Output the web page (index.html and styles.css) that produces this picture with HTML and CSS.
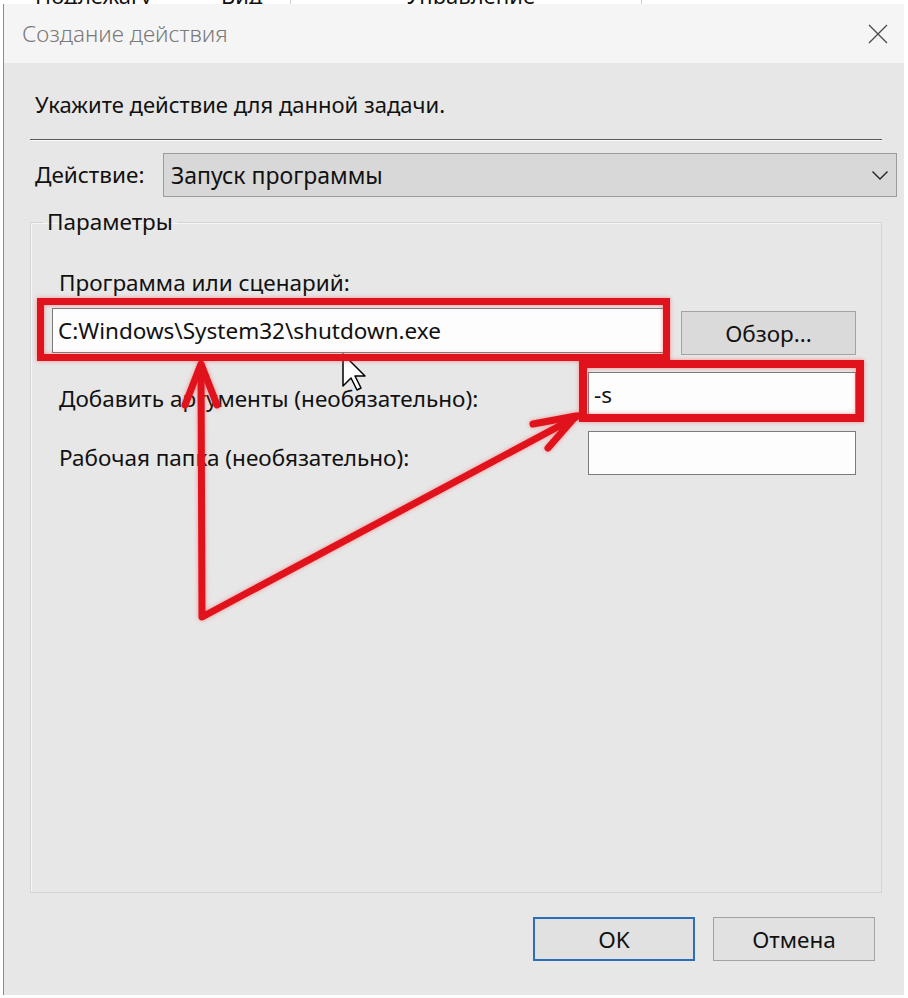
FILE: index.html
```html
<!DOCTYPE html>
<html lang="ru">
<head>
    <meta charset="UTF-8">
    <meta name="viewport" content="width=device-width, initial-scale=1.0">
    <title>Создание действия</title>
    <link rel="stylesheet" href="styles.css">
</head>
<body>
    <div class="behind">
        <span class="col c1">Подлежагу</span>
        <span class="col c2">Вид</span>
        <span class="col c3">Управление</span>
    </div>

    <div class="window">
        <div class="titlebar">
            <span class="title">Создание действия</span>
            <svg class="close" width="20" height="20" viewBox="0 0 20 20">
                <path d="M1 1L19 19M19 1L1 19" stroke="#4a4a4a" stroke-width="1.3" fill="none"/>
            </svg>
        </div>

        <div class="content">
            <p class="prompt">Укажите действие для данной задачи.</p>
            <div class="rule"></div>

            <div class="action-row">
                <span class="label">Действие:</span>
                <div class="combo">
                    <span>Запуск программы</span>
                    <svg width="16" height="9" viewBox="0 0 16 9">
                        <polyline points="0.5,0.5 8,8 15.5,0.5" stroke="#222" stroke-width="1.4" fill="none"/>
                    </svg>
                </div>
            </div>

            <fieldset class="params">
                <legend>Параметры</legend>
                <div class="params-body">
                    <div class="field-label">Программа или сценарий:</div>
                    <div class="prog-row">
                        <input class="textbox prog" type="text" value="C:Windows\System32\shutdown.exe">
                        <button class="btn browse">Обзор...</button>
                    </div>
                    <div class="opt-row">
                        <span class="field-label">Добавить аргументы (необязательно):</span>
                        <input class="textbox short" type="text" value="-s">
                    </div>
                    <div class="opt-row second">
                        <span class="field-label">Рабочая папка (необязательно):</span>
                        <input class="textbox short" type="text" value="">
                    </div>
                </div>
            </fieldset>

            <div class="footer">
                <button class="btn ok">OK</button>
                <button class="btn">Отмена</button>
            </div>
        </div>
    </div>

    <!-- red annotation drawn over the dialog -->
    <svg class="marks" width="908" height="998" viewBox="0 0 908 998">
        <path class="cursor" d="M343 354 V386 L351 378 L357 390 L361 388 L355 376 L365 376 Z"/>
        <g class="red">
            <rect x="40.5" y="301.5" width="626" height="56"/>
            <rect x="583" y="364" width="277" height="54" stroke-width="8"/>
            <polyline points="201,365 202,617 578,416"/>
            <polyline points="185,405 201,364 217,405"/>
            <polyline points="533,424 576,416 548,448"/>
        </g>
    </svg>
</body>
</html>
```

FILE: styles.css
```css
body {
    margin: 0;
    width: 908px;
    height: 998px;
    overflow: hidden;
    position: relative;
    background: #fff;
    font-family: "Noto Sans", "Open Sans", sans-serif;
    color: #111;
}

.behind {
    height: 4px;
    overflow: hidden;
    display: flex;
    align-items: flex-end;
    font-size: 22px;
}
.col {
    line-height: 18px;
    height: 18px;
    flex: none;
}
.c1 { margin-left: 35px; width: 255px; border-right: 1px solid #ccc; }
.c2 { margin-left: -70px; width: 420px; border-right: 1px solid #ccc; }
.c3 { margin-left: -236px; }

.window {
    margin-left: 3px;
    width: 900px;
    height: 991px;
    border-left: 1px solid #8c8c8c;
    background: #e7e7e7;
    display: flex;
    flex-direction: column;
}

.titlebar {
    flex: none;
    height: 59px;
    background: #f5f5f5;
    display: flex;
    align-items: center;
    justify-content: space-between;
    padding: 0 16px 0 18px;
}
.title {
    font-size: 22.5px;
    font-weight: 300;
    color: #7a7a7a;
}

.content {
    flex: 1;
    display: flex;
    flex-direction: column;
    padding: 27px 22px 34px 26px;
    font-size: 22.5px;
    line-height: 28px;
}

.prompt {
    margin: 0 0 21px;
    padding-left: 5px;
    font-size: 22px;
}
.rule {
    height: 1px;
    background: #5a5a5a;
    border-bottom: 1px solid #fbfbfb;
    margin-bottom: 12px;
}

.action-row {
    display: flex;
    align-items: center;
    margin-right: -15px;
}
.label {
    width: 133px;
    padding-left: 5px;
    box-sizing: border-box;
}
.combo {
    flex: 1;
    height: 44px;
    box-sizing: border-box;
    border: 1px solid #9b9b9b;
    background: #d8d8d8;
    display: flex;
    align-items: center;
    justify-content: space-between;
    padding: 0 8px 0 7px;
    font-size: 23px;
}

.params {
    flex: 1;
    min-width: 0;
    margin: 11px 0 0;
    padding: 0;
    border: 1px solid #d4d4d4;
    box-shadow: inset 1px 1px 0 #f6f6f6;
}
.params legend {
    margin-left: 12px;
    padding: 0 4px;
    line-height: 28px;
}
.params-body {
    padding: 33px 25px 0 21px;
}

.field-label {
    padding-left: 7px;
}

.prog-row {
    display: flex;
    align-items: flex-start;
    margin-top: 11px;
}
.opt-row {
    display: flex;
    align-items: flex-start;
    justify-content: space-between;
    margin-top: 17px;
}
.opt-row .field-label {
    padding-top: 13px;
}
.opt-row.second {
    margin-top: 14px;
}

.textbox {
    height: 45px;
    box-sizing: border-box;
    border: 1px solid #7a7a7a;
    background: #fdfdfd;
    padding: 0 5px;
    font-family: inherit;
    font-size: 22.5px;
    color: #111;
    outline: none;
}
.prog {
    width: 612px;
}
.short {
    width: 268px;
}
.opt-row.second .short {
    height: 44px;
}

.btn {
    height: 44px;
    width: 162px;
    box-sizing: border-box;
    border: 1px solid #a3a3a3;
    background: #e1e1e1;
    font-family: inherit;
    font-size: 22.5px;
    color: #111;
    padding: 0;
}
.browse {
    width: 175px;
    margin: 3px 0 0 17px;
    background: #dadada;
}
.ok {
    border: 2px solid #2b6fba;
}

.footer {
    flex: none;
    display: flex;
    justify-content: flex-end;
    gap: 18px;
    margin-top: 24px;
    padding-right: 7px;
}

.marks {
    position: absolute;
    top: 0;
    left: 0;
    pointer-events: none;
}
.cursor {
    fill: #fff;
    stroke: #000;
    stroke-width: 1.5;
    stroke-linejoin: round;
}
.red {
    fill: none;
    stroke: #e0121b;
    stroke-width: 7;
    stroke-linejoin: round;
    stroke-linecap: round;
    filter: drop-shadow(0 0 2px rgba(255, 80, 80, 0.6));
}
.red rect {
    stroke-linejoin: miter;
}
```
